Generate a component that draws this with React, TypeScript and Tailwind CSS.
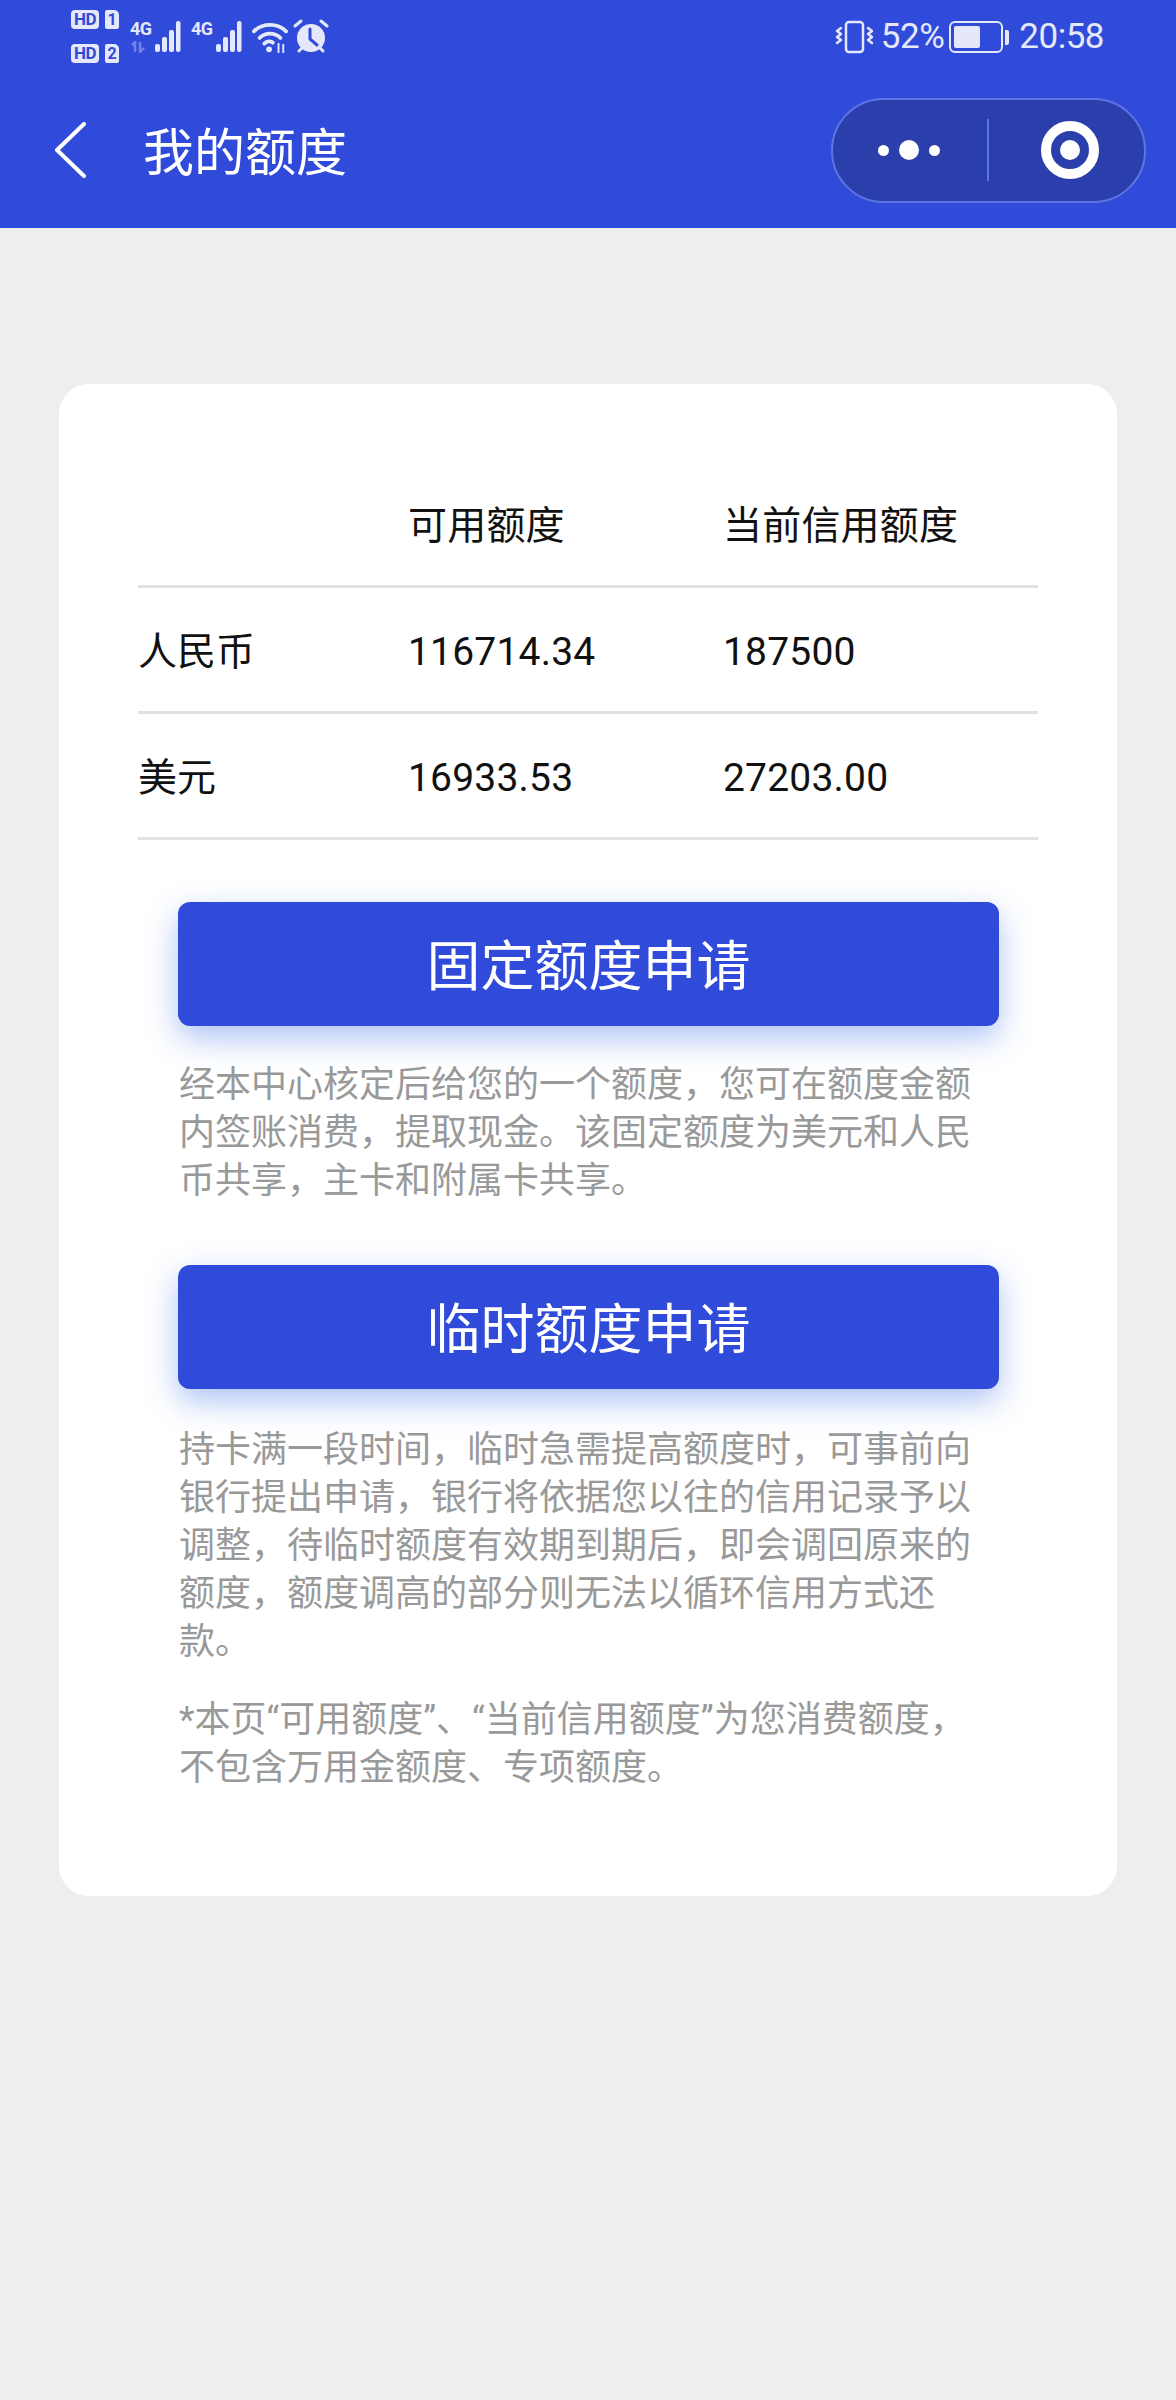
const FONT = '"Noto Sans CJK SC", sans-serif'

function SimBadge({ n }: { n: string }) {
  return (
    <div className="flex items-center gap-[6px]">
      <span className="flex h-[19px] w-[28px] items-center justify-center rounded-[4px] bg-[#e4e8fa] font-['Roboto'] text-[17px] leading-none font-bold tracking-[-0.5px] text-[#304bd9]">HD</span>
      <span className="flex h-[19px] w-[14px] items-center justify-center rounded-[2px] rounded-tr-[5px] bg-[#e4e8fa] font-['Roboto'] text-[16px] leading-none font-bold text-[#304bd9]">
        {n}
      </span>
    </div>
  )
}

function Signal({ dim }: { dim?: boolean }) {
  return (
    <div className="relative h-[34px] w-[52px]">
      <span className="absolute top-[1px] left-0 font-['Roboto'] text-[18px] leading-[16px] font-bold tracking-[-0.5px] text-[#e4e8fa]">4G</span>
      {dim && (
        <svg className="absolute top-[21px] left-0" width="16" height="12" viewBox="0 0 16 12" fill="none" stroke="#7083e6" strokeWidth="2.5">
          <path d="M5 11V1L2 4" />
          <path d="M10 1v10l4-4" />
        </svg>
      )}
      <svg className="absolute top-0 left-[19px]" width="32" height="34" viewBox="0 0 32 34" fill="#e4e8fa">
        <rect x="6" y="24" width="5" height="8" rx="2" />
        <rect x="13" y="17" width="5" height="15" rx="2" />
        <rect x="20" y="10" width="5" height="22" rx="2" />
        <rect x="27" y="1" width="4.5" height="31" rx="2" />
      </svg>
    </div>
  )
}

function Wifi() {
  return (
    <svg width="36" height="34" viewBox="0 0 38 34" fill="none" stroke="#e4e8fa" strokeWidth="4" strokeLinecap="round">
      <path d="M2 11C11 2 27 2 36 11" />
      <path d="M8 18C14 12 24 12 30 18" />
      <path d="M13 24C16 21 20 21 22 23" />
      <circle cx="18" cy="30" r="3" fill="#e4e8fa" stroke="none" />
      <path d="M28 24v9M33 25v8" strokeWidth="2" />
    </svg>
  )
}

function Alarm() {
  return (
    <svg width="36" height="36" viewBox="0 0 36 36" fill="none">
      <circle cx="18" cy="19" r="14" fill="#e4e8fa" />
      <path d="M17 10v10l7 6" stroke="#304bd9" strokeWidth="3" strokeLinecap="round" strokeLinejoin="round" />
      <path d="M2 7l6-5M34 7l-6-5M6 32l3-3M30 32l-3-3" stroke="#e4e8fa" strokeWidth="3" strokeLinecap="round" />
    </svg>
  )
}

function Vibrate() {
  return (
    <svg width="40" height="34" viewBox="0 0 40 34" fill="none" stroke="#e4e8fa" strokeWidth="2.5" strokeLinecap="round" strokeLinejoin="round">
      <rect x="11" y="2" width="17" height="30" rx="3" />
      <path d="M6 8l-4 3 4 3-4 3 4 3-4 3" />
      <path d="M33 8l4 3-4 3 4 3-4 3 4 3" />
    </svg>
  )
}

function Battery() {
  return (
    <div className="flex items-center gap-[2px]">
      <div className="flex h-[32px] w-[54px] items-center rounded-[6px] border-[2.5px] border-[#e4e8fa] p-[3px]">
        <div className="h-full w-[26px] rounded-[2px] bg-[#e4e8fa]" />
      </div>
      <div className="h-[15px] w-[4px] rounded-r-[2px] bg-[#e4e8fa]" />
    </div>
  )
}

function StatusBar() {
  return (
    <div className="flex h-[64px] items-start justify-between pt-[10px] pr-[72px] pl-[71px]">
      <div className="flex items-start">
        <div className="flex flex-col gap-[15px]">
          <SimBadge n="1" />
          <SimBadge n="2" />
        </div>
        <div className="mt-[10px] ml-[11px] flex items-start gap-[9px]">
          <Signal dim />
          <Signal />
          <Wifi />
          <div className="mt-[-1px] ml-[-4px]">
            <Alarm />
          </div>
        </div>
      </div>
      <div className="flex items-center pt-[10px]">
        <div className="mr-[3px]">
          <Vibrate />
        </div>
        <span className="ml-[3px] font-['Roboto'] text-[35px] leading-[34px] tracking-[-0.5px] text-[#e4e8fa]">52%</span>
        <div className="ml-[5px]">
          <Battery />
        </div>
        <span className="ml-[10px] font-['Roboto'] text-[35px] leading-[34px] tracking-[-0.5px] text-[#e4e8fa]">20:58</span>
      </div>
    </div>
  )
}

function NavBar() {
  return (
    <div className="flex h-[164px] items-center justify-between pt-[8px] pr-[30px] pl-[54px]">
      <div className="flex items-center">
        <svg width="32" height="56" viewBox="0 0 32 56" fill="none" stroke="#ffffff" strokeWidth="4" strokeLinecap="round" strokeLinejoin="round">
          <path d="M30 2L3 28l27 26" />
        </svg>
        <span className="ml-[57px] pb-[2px] text-[51px] leading-[60px] text-white">我的额度</span>
      </div>
      <div className="flex h-[105px] w-[315px] items-center rounded-full border-2 border-[#5f74e3] bg-[#2a3fab]">
        <div className="flex w-[154px] items-center justify-end gap-[10px] pr-[47px]">
          <span className="h-[11px] w-[11px] rounded-full bg-white" />
          <span className="h-[20px] w-[20px] rounded-full bg-white" />
          <span className="h-[11px] w-[11px] rounded-full bg-white" />
        </div>
        <div className="h-[62px] w-[2px] bg-[#5f74e3]" />
        <div className="ml-[52px] flex h-[58px] w-[58px] items-center justify-center rounded-full border-[10px] border-white">
          <span className="h-[20px] w-[20px] rounded-full bg-white" />
        </div>
      </div>
    </div>
  )
}

const rows = [
  { name: '人民币', available: '116714.34', total: '187500' },
  { name: '美元', available: '16933.53', total: '27203.00' },
]

function CreditRow({ a, b, c }: { a: string; b: string; c: string }) {
  return (
    <div className="flex h-[126px] items-center border-b-[3px] border-[#e2e2e2] text-[39px] text-[#111111]">
      <span className="w-[270px] pb-[3px]">{a}</span>
      <span className="w-[315px] pt-[6px] font-['Roboto','Noto_Sans_CJK_SC',sans-serif] tracking-[0.2px]">{b}</span>
      <span className="pt-[6px] font-['Roboto','Noto_Sans_CJK_SC',sans-serif] tracking-[0.2px]">{c}</span>
    </div>
  )
}

function Apply({ label }: { label: string }) {
  return (
    <button className="flex h-[124px] w-[821px] items-center justify-center rounded-[12px] bg-[#304bd9] pb-[4px] text-[54px] text-white shadow-[0_12px_32px_rgba(70,120,230,0.45)]">
      {label}
    </button>
  )
}

function Note({ children }: { children: string }) {
  return <p className="w-[800px] font-['Roboto','Noto_Sans_CJK_SC',sans-serif] text-[36px] leading-[48px] text-[#999999]">{children}</p>
}

export default function App() {
  return (
    <div className="h-[2400px] w-[1176px] bg-[#eeeeee]" style={{ fontFamily: FONT }}>
      <div className="h-[228px] bg-[#304bd9]">
        <StatusBar />
        <NavBar />
      </div>

      <div className="mx-[59px] mt-[156px] h-[1512px] rounded-[30px] bg-white px-[79px] pt-[78px]">
        <CreditRow a="" b="可用额度" c="当前信用额度" />
        <CreditRow a={rows[0].name} b={rows[0].available} c={rows[0].total} />
        <CreditRow a={rows[1].name} b={rows[1].available} c={rows[1].total} />

        <div className="mt-[62px] flex flex-col items-start pl-[40px]">
          <Apply label="固定额度申请" />
          <div className="mt-[35px] pl-[1px]">
            <Note>经本中心核定后给您的一个额度，您可在额度金额内签账消费，提取现金。该固定额度为美元和人民币共享，主卡和附属卡共享。</Note>
          </div>
          <div className="mt-[60px]">
            <Apply label="临时额度申请" />
          </div>
          <div className="mt-[37px] pl-[1px]">
            <Note>持卡满一段时间，临时急需提高额度时，可事前向银行提出申请，银行将依据您以往的信用记录予以调整，待临时额度有效期到期后，即会调回原来的额度，额度调高的部分则无法以循环信用方式还款。</Note>
          </div>
          <div className="mt-[30px] pl-[1px]">
            <Note>*本页“可用额度”、“当前信用额度”为您消费额度，不包含万用金额度、专项额度。</Note>
          </div>
        </div>
      </div>
    </div>
  )
}
